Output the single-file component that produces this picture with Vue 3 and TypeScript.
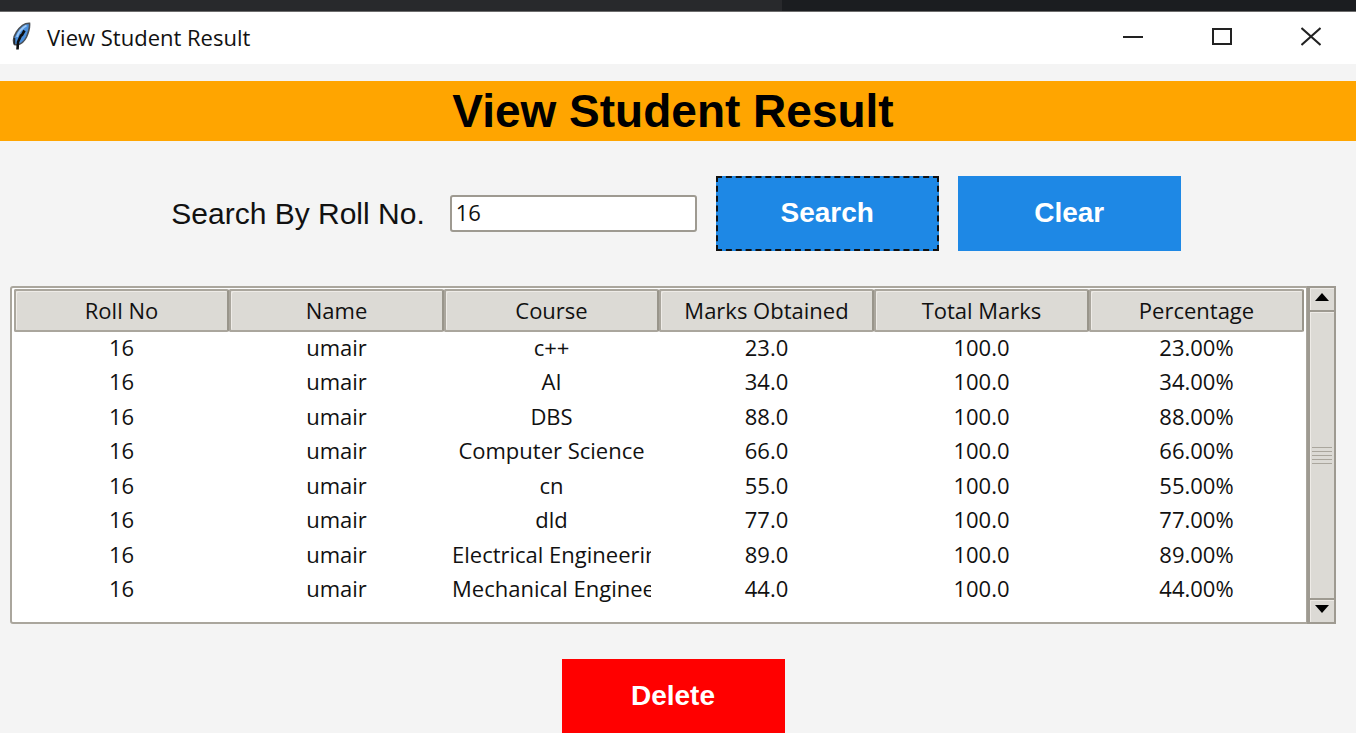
<script setup lang="ts">
import { ref } from 'vue'

interface Result {
  roll: string
  name: string
  course: string
  marks: string
  total: string
  percentage: string
}

const columns: string[] = ['Roll No', 'Name', 'Course', 'Marks Obtained', 'Total Marks', 'Percentage']

const scores: [string, number][] = [
  ['c++', 23],
  ['AI', 34],
  ['DBS', 88],
  ['Computer Science', 66],
  ['cn', 55],
  ['dld', 77],
  ['Electrical Engineering', 89],
  ['Mechanical Engineering', 44],
]

const results: Result[] = scores.map(([course, marks]) => ({
  roll: '16',
  name: 'umair',
  course,
  marks: marks.toFixed(1),
  total: '100.0',
  percentage: `${marks.toFixed(2)}%`,
}))

const roll = ref('16')
const rows = ref<Result[]>(results)

function search(): void {
  rows.value = results.filter((r) => r.roll === roll.value.trim())
}

function clear(): void {
  roll.value = ''
  rows.value = []
}

function remove(): void {
  rows.value = []
}
</script>

<template>
  <div class="window">
    <div class="backdrop"><span></span></div>
    <header class="titlebar">
      <svg class="feather" viewBox="0 0 20 28" aria-hidden="true">
        <path d="M17.500 1.200C13 1 8 4.500 4.500 10 1.500 14.500 0.800 19 2.500 22.500l3 0.500c4-1 7-4 9-8 2-4.500 3.500-9 3-13.800z" fill="#4a8fdc" stroke="#4b5056" stroke-width="1.600" />
        <path d="M14.500 3.500C10 6 6.500 10 5 15" fill="none" stroke="#9cc8f5" stroke-width="2" />
        <path d="M12.500 8.500L10 13l-1 0.500-3 6.500-0.500 7.500" fill="none" stroke="#0b0d10" stroke-width="2.600" />
        <path d="M2.500 16v6.500" fill="none" stroke="#22262b" stroke-width="1.600" />
      </svg>
      <span class="caption">View Student Result</span>
      <div class="controls">
        <button type="button" aria-label="Minimize">
          <svg viewBox="0 0 20 20"><path d="M0 11h20" /></svg>
        </button>
        <button type="button" aria-label="Maximize">
          <svg viewBox="0 0 20 20"><path d="M1 3h18v15H1z" /></svg>
        </button>
        <button type="button" aria-label="Close">
          <svg viewBox="0 0 20 20"><path d="M0.500 2l19 17M19.500 2l-19 17" /></svg>
        </button>
      </div>
    </header>

    <h1>View Student Result</h1>

    <main>
      <form class="search" @submit.prevent="search">
        <label for="roll">Search By Roll No.</label>
        <input id="roll" v-model="roll" type="text" autocomplete="off" />
        <button class="action focused" type="submit">Search</button>
        <button class="action" type="button" @click="clear">Clear</button>
      </form>

      <div class="results">
        <div class="sheet">
          <table>
            <thead>
              <tr>
                <th v-for="c in columns" :key="c" scope="col">{{ c }}</th>
              </tr>
            </thead>
            <tbody>
              <tr v-for="r in rows" :key="r.course">
                <td><div>{{ r.roll }}</div></td>
                <td><div>{{ r.name }}</div></td>
                <td><div>{{ r.course }}</div></td>
                <td><div>{{ r.marks }}</div></td>
                <td><div>{{ r.total }}</div></td>
                <td><div>{{ r.percentage }}</div></td>
              </tr>
            </tbody>
          </table>
        </div>
        <div class="scrollbar">
          <button type="button" aria-label="Scroll up">
            <svg viewBox="0 0 14 8"><path d="M0 8L7 0l7 8z" /></svg>
          </button>
          <div class="thumb"><i v-for="n in 5" :key="n"></i></div>
          <button type="button" aria-label="Scroll down">
            <svg viewBox="0 0 14 8"><path d="M0 0h14L7 8z" /></svg>
          </button>
        </div>
      </div>

      <button class="action danger" type="button" @click="remove">Delete</button>
    </main>
  </div>
</template>

<style>
body {
  margin: 0;
  overflow: hidden;
  background: #f4f4f4;
}
</style>

<style scoped>
.window {
  height: 100vh;
  overflow: hidden;
  background: #f4f4f4;
  color: #111;
  font-family: "Open Sans", "Noto Sans", sans-serif;
  font-size: 22px;
}
button {
  box-sizing: border-box;
  margin: 0;
  padding: 0;
  border: 0;
  font: inherit;
}
.backdrop {
  display: flex;
  justify-content: flex-end;
  height: 11px;
  background: #28292c;
  border-bottom: 1px solid #6c6c6c;
}
.backdrop span {
  width: 42.3%;
  background: #1b1d20;
}
.titlebar {
  display: flex;
  align-items: center;
  height: 52px;
  padding-left: 12px;
  background: #fff;
}
.feather {
  width: 20px;
  height: 28px;
  margin-bottom: 4px;
}
.caption {
  flex: 1;
  margin-left: 15px;
  padding-bottom: 2px;
}
.controls {
  display: flex;
  height: 100%;
}
.controls button {
  display: flex;
  align-items: center;
  justify-content: center;
  width: 89px;
  background: transparent;
}
.controls svg {
  width: 20px;
  height: 20px;
  margin: 0 2px 4px 0;
  fill: none;
  stroke: #222;
  stroke-width: 2;
}
h1 {
  margin: 17px 0 0;
  padding: 0 20px 0 10px;
  background: #ffa500;
  color: #000;
  font: bold 46px/60px "Liberation Sans", Arial, sans-serif;
  text-align: center;
}
main {
  display: flex;
  flex-direction: column;
  align-items: center;
  gap: 35px;
  padding: 35px 20px 0 10px;
}
.search {
  display: flex;
  align-items: center;
  gap: 19px;
  margin-left: 6px;
}
.search label {
  margin-right: 6px;
  font: 30px/36px "Liberation Sans", Arial, sans-serif;
}
.search input {
  box-sizing: border-box;
  width: 247px;
  height: 37px;
  padding: 0 4px 3px;
  border: 2px solid #9e9a91;
  border-radius: 3px;
  outline: 0;
  background: #fff;
  color: #111;
  font: inherit;
}
.action {
  width: 223px;
  height: 75px;
  padding-bottom: 2px;
  background: #1e88e5;
  color: #fff;
  font: bold 28px/32px "Liberation Sans", Arial, sans-serif;
}
.focused {
  border: 2px dashed #111;
}
.danger {
  flex: none;
  background: #f00;
}
.results {
  display: flex;
  align-self: stretch;
  height: 338px;
}
.sheet {
  box-sizing: border-box;
  flex: 1;
  min-width: 0;
  padding: 1px 2px;
  border: 2px solid #aaa69d;
  border-right-width: 1px;
  border-radius: 3px 0 0 3px;
  background: #fff;
}
table {
  width: 100%;
  table-layout: fixed;
  border-spacing: 0;
}
th {
  box-sizing: border-box;
  height: 43px;
  padding: 0 0 2px;
  border: 2px solid #aaa69d;
  border-right-color: #99958b;
  border-radius: 2px;
  background: #dcdad5;
  box-shadow: inset 1px 1px #eeebe7;
  font-weight: 400;
}
td {
  height: 34px;
  padding: 0 8px;
  vertical-align: top;
}
tr:nth-child(even) td {
  height: 35px;
}
td div {
  overflow: hidden;
  line-height: 31px;
  text-align: center;
  white-space: nowrap;
}
.scrollbar {
  box-sizing: border-box;
  display: flex;
  flex-direction: column;
  width: 29px;
  border: 2px solid #9e9a91;
  border-left-width: 3px;
  background: #dcdad5;
}
.scrollbar button {
  display: flex;
  align-items: center;
  justify-content: center;
  height: 22px;
  padding-bottom: 4px;
  background: #dcdad5;
  box-shadow: inset 1px 1px #eeebe7;
}
.scrollbar svg {
  width: 14px;
  height: 8px;
  fill: #000;
}
.thumb {
  display: flex;
  flex: 1;
  flex-direction: column;
  align-items: center;
  justify-content: center;
  gap: 3px;
  border: solid #9e9a91;
  border-width: 2px 0;
  box-shadow: inset 1px 1px #eeebe7;
}
.thumb i {
  width: 20px;
  height: 1px;
  background: #aaa69d;
}
</style>
